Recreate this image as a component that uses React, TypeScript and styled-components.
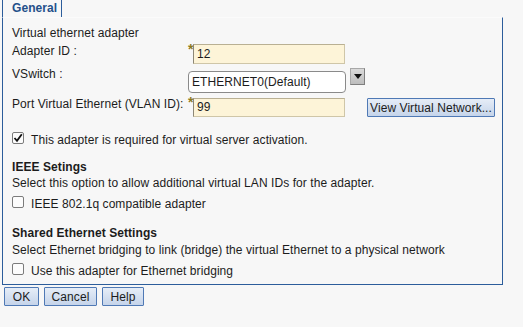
import React from "react";
import styled, { createGlobalStyle } from "styled-components";

const GlobalStyle = createGlobalStyle`
  html, body {
    margin: 0;
    padding: 0;
    background: #f7f7f7;
  }
  body {
    font-family: "Liberation Sans", Arial, sans-serif;
    font-size: 12px;
    letter-spacing: 0.07px;
    color: #1c1c1c;
  }
`;

const Page = styled.div`
  width: 523px;
  height: 327px;
  padding-left: 2px;
  box-sizing: border-box;
`;

const TabBar = styled.div`
  display: flex;
  height: 17px;
`;

const Tab = styled.div`
  width: 60px;
  height: 17px;
  box-sizing: border-box;
  border-left: 1px solid #2c5d9b;
  border-right: 1px solid #2c5d9b;
  padding-left: 9px;
  font-weight: bold;
  color: #24508a;
  line-height: 14px;
  padding-top: 1px;
`;

const Panel = styled.div`
  width: 501px;
  box-sizing: border-box;
  border: 1px solid #2c5d9b;
  border-top: 1px solid #fbfbfb;
  padding: 8px 0 6px 9px;
  display: flex;
  flex-direction: column;
`;

const Line = styled.div<{ mt?: number; bold?: boolean }>`
  line-height: 14px;
  height: 14px;
  margin-top: ${p => p.mt ?? 0}px;
  font-weight: ${p => (p.bold ? "bold" : "normal")};
  white-space: nowrap;
`;

const FieldRow = styled.div<{ mt: number }>`
  display: grid;
  grid-template-columns: 176px 5px 152px 1fr;
  align-items: start;
  margin-top: ${p => p.mt}px;
`;

const Label = styled.div`
  line-height: 14px;
  white-space: nowrap;
`;

const Star = styled.div`
  color: #8c7a1e;
  font-size: 14px;
  font-weight: bold;
  line-height: 10px;
  height: 10px;
`;

const TextInput = styled.div<{ mt?: number; h: number }>`
  margin-top: ${p => p.mt ?? 0}px;
  height: ${p => p.h}px;
  box-sizing: border-box;
  background: #fdf4d8;
  border: 1px solid #cfc6a8;
  border-left-color: #8d8776;
  border-top-color: #b9b093;
  padding-left: 3px;
  line-height: ${p => p.h - 2}px;
`;

const SelectWrap = styled.div`
  grid-column: 2 / span 3;
  display: flex;
  align-items: flex-start;
  gap: 4px;
`;

const SelectBox = styled.div`
  margin-top: 4px;
  width: 158px;
  height: 22px;
  box-sizing: border-box;
  background: #ffffff;
  border: 1px solid #8a8a8a;
  border-radius: 4px;
  padding-left: 3px;
  line-height: 20px;
`;

const DropButton = styled.div`
  margin-top: 1px;
  width: 15px;
  height: 17px;
  box-sizing: border-box;
  background: linear-gradient(#dadada, #bdbdbd);
  border: 1px solid #a8a8a8;
  border-right-color: #7f7f7f;
  border-bottom-color: #7f7f7f;
  display: flex;
  align-items: center;
  justify-content: center;
`;

const ActionButton = styled.button<{ w: number }>`
  width: ${p => p.w}px;
  height: 19px;
  box-sizing: border-box;
  padding: 0;
  margin: 0;
  font-family: inherit;
  font-size: 12px;
  letter-spacing: inherit;
  color: #1c1c1c;
  background: linear-gradient(#e6edf7, #c5d4ea);
  border: 1px solid #4f79b5;
  border-radius: 1px;
  line-height: 16px;
  cursor: pointer;
`;

const ViewButtonCell = styled.div`
  padding-left: 22px;
  margin-top: 1px;
`;

const CheckRow = styled.div<{ mt: number }>`
  display: flex;
  align-items: flex-start;
  gap: 7px;
  margin-top: ${p => p.mt}px;
  line-height: 14px;
  height: 14px;
`;

const Box = styled.span`
  width: 12px;
  height: 12px;
  margin-top: -1px;
  box-sizing: border-box;
  border: 1px solid #7b7b7b;
  border-radius: 2px;
  background: #fcfcfc;
  display: flex;
  align-items: center;
  justify-content: center;
`;

const ButtonBar = styled.div`
  display: flex;
  gap: 5px;
  margin-top: 2px;
  padding-left: 2px;
`;

const Check = ({ checked }: { checked?: boolean }) => (
  <Box>
    {checked && (
      <svg width="10" height="10" viewBox="0 0 10 10">
        <path d="M1.5 5 L4 7.8 L8.8 1.2" fill="none" stroke="#111" strokeWidth="1.8" />
      </svg>
    )}
  </Box>
);

export default function App() {
  return (
    <Page>
      <GlobalStyle />
      <TabBar>
        <Tab>General</Tab>
      </TabBar>
      <Panel>
        <Line>Virtual ethernet adapter</Line>
        <FieldRow mt={4}>
          <Label>Adapter ID :</Label>
          <Star>*</Star>
          <TextInput h={20}>12</TextInput>
        </FieldRow>
        <FieldRow mt={3}>
          <Label>VSwitch :</Label>
          <SelectWrap>
            <SelectBox>ETHERNET0(Default)</SelectBox>
            <DropButton>
              <svg width="8" height="5" viewBox="0 0 8 5">
                <path d="M0 0 H8 L4 5 Z" fill="#111" />
              </svg>
            </DropButton>
          </SelectWrap>
        </FieldRow>
        <FieldRow mt={4}>
          <Label>Port Virtual Ethernet (VLAN ID):</Label>
          <Star>*</Star>
          <TextInput mt={1} h={19}>99</TextInput>
          <ViewButtonCell>
            <ActionButton w={128}>View Virtual Network...</ActionButton>
          </ViewButtonCell>
        </FieldRow>
        <CheckRow mt={16}>
          <Check checked />
          This adapter is required for virtual server activation.
        </CheckRow>
        <Line mt={13} bold>IEEE Setings</Line>
        <Line mt={2}>Select this option to allow additional virtual LAN IDs for the adapter.</Line>
        <CheckRow mt={7}>
          <Check />
          IEEE 802.1q compatible adapter
        </CheckRow>
        <Line mt={15} bold>Shared Ethernet Settings</Line>
        <Line mt={3}>Select Ethernet bridging to link (bridge) the virtual Ethernet to a physical network</Line>
        <CheckRow mt={7}>
          <Check />
          Use this adapter for Ethernet bridging
        </CheckRow>
      </Panel>
      <ButtonBar>
        <ActionButton w={35}>OK</ActionButton>
        <ActionButton w={53}>Cancel</ActionButton>
        <ActionButton w={42}>Help</ActionButton>
      </ButtonBar>
    </Page>
  );
}
